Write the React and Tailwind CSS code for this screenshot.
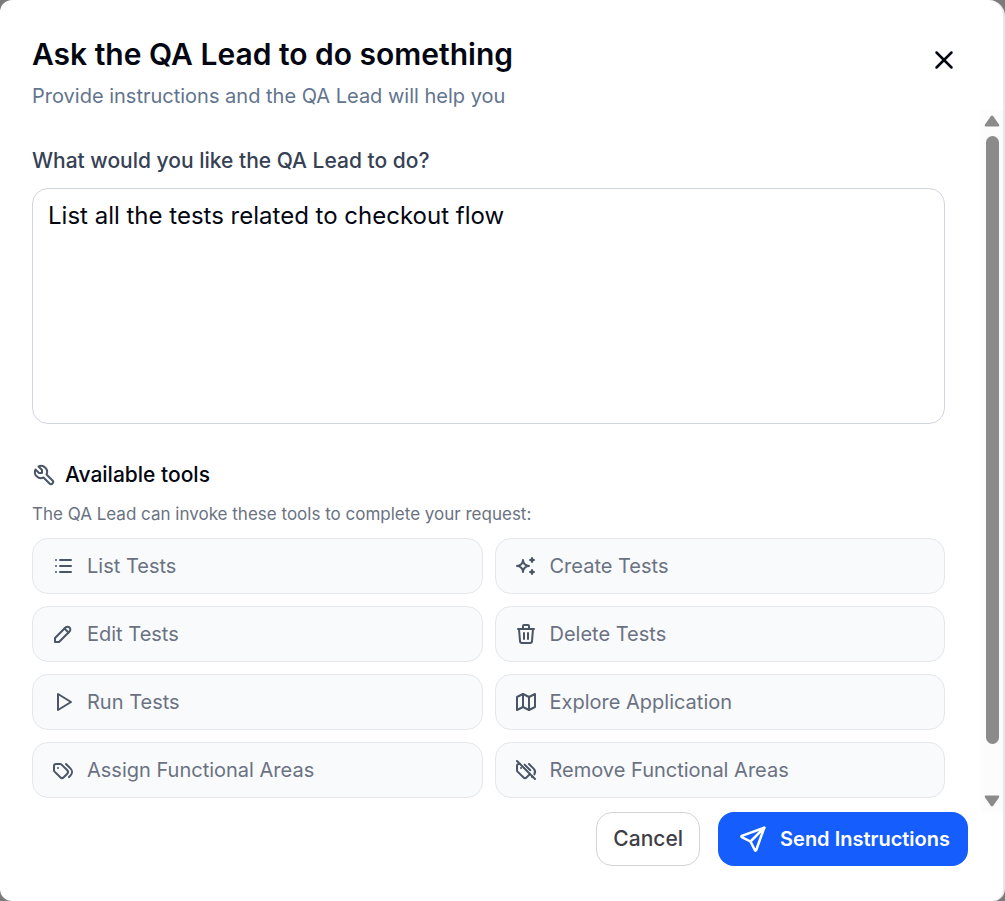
import {
  TbTool, TbList, TbSparkles, TbPencil, TbTrash, TbPlayerPlay, TbMap, TbTags, TbTagsOff, TbSend, TbX,
} from "react-icons/tb";

const tools = [
  { label: "List Tests", Icon: TbList },
  { label: "Create Tests", Icon: TbSparkles },
  { label: "Edit Tests", Icon: TbPencil },
  { label: "Delete Tests", Icon: TbTrash },
  { label: "Run Tests", Icon: TbPlayerPlay },
  { label: "Explore Application", Icon: TbMap },
  { label: "Assign Functional Areas", Icon: TbTags },
  { label: "Remove Functional Areas", Icon: TbTagsOff },
];

function ToolCard({ label, Icon }) {
  return (
    <li className="flex h-14 items-center gap-3 rounded-2xl border border-gray-200 bg-gray-50 px-[18px] text-[20px] text-gray-500">
      <Icon className="size-6 shrink-0 text-gray-600" aria-hidden="true" />
      <span>{label}</span>
    </li>
  );
}

function ScrollTrack() {
  return (
    <div className="flex w-[22px] shrink-0 flex-col items-center bg-[#fcfcfc] py-[5px]" aria-hidden="true">
      <svg className="h-3 w-4" viewBox="0 0 16 12" fill="#8b8b8b">
        <path d="M6.8 1.2a1.5 1.5 0 0 1 2.4 0l5.8 8.4c.6.9.1 1.9-1 1.9H2c-1.1 0-1.6-1-1-1.9z" />
      </svg>
      <div className="mt-[9px] mb-[51px] w-[13px] grow rounded-full bg-[#8b8b8b]" />
      <svg className="h-3 w-4" viewBox="0 0 16 12" fill="#8b8b8b">
        <path d="M6.8 10.8a1.5 1.5 0 0 0 2.4 0l5.8-8.4c.6-.9.1-1.9-1-1.9H2C.9.5.4 1.5 1 2.4z" />
      </svg>
    </div>
  );
}

export default function App() {
  return (
    <div className="min-h-screen bg-[#7b7b7b] font-['Inter','Liberation_Sans',sans-serif]">
      <div
        role="dialog"
        aria-labelledby="dialog-title"
        aria-describedby="dialog-description"
        className="flex min-h-screen flex-col rounded-xl rounded-tr-2xl border-r-2 border-gray-200 bg-white"
      >
        <header className="flex items-start justify-between pt-9 pr-11 pl-8">
          <div>
            <h1 id="dialog-title" className="text-[30px] leading-9 font-semibold text-gray-950">
              Ask the QA Lead to do something
            </h1>
            <p id="dialog-description" className="mt-2.5 text-[20px] leading-7 text-slate-500">
              Provide instructions and the QA Lead will help you
            </p>
          </div>
          <button type="button" aria-label="Close" className="mt-[9px] text-gray-950">
            <TbX className="size-[30px]" />
          </button>
        </header>

        <div className="flex">
          <main className="min-w-0 grow pt-9 pr-9 pl-8">
            <label htmlFor="instructions" className="block text-[21px] leading-[30px] font-medium text-gray-700">
              What would you like the QA Lead to do?
            </label>
            <textarea
              id="instructions"
              defaultValue="List all the tests related to checkout flow"
              className="mt-3 block h-[236px] w-full resize-none rounded-2xl border border-gray-300 bg-white px-[15px] py-[9px] text-[24px] leading-9 text-gray-950 outline-none"
            />
            <section className="mt-9">
              <h2 className="flex items-center gap-[9px] text-[21px] leading-[30px] font-medium text-gray-950">
                <TbTool className="size-6 text-gray-600" aria-hidden="true" />
                Available tools
              </h2>
              <p className="mt-3 text-[17px] leading-6 text-gray-500">
                The QA Lead can invoke these tools to complete your request:
              </p>
              <ul className="mt-3 grid grid-cols-2 gap-3 pb-3.5">
                {tools.map((tool) => (
                  <ToolCard key={tool.label} {...tool} />
                ))}
              </ul>
            </section>
          </main>
          <ScrollTrack />
        </div>

        <footer className="flex justify-end gap-[18px] pr-[35px] pb-[35px]">
          <button type="button" className="h-[54px] rounded-2xl border border-zinc-300 bg-white px-4 text-[21px] font-medium text-zinc-700">
            Cancel
          </button>
          <button type="button" className="flex h-[54px] items-center gap-3 rounded-2xl bg-[#155dfc] pr-[18px] pl-5 text-[20px] font-semibold text-white">
            <TbSend className="size-[30px]" aria-hidden="true" />
            Send Instructions
          </button>
        </footer>
      </div>
    </div>
  );
}
